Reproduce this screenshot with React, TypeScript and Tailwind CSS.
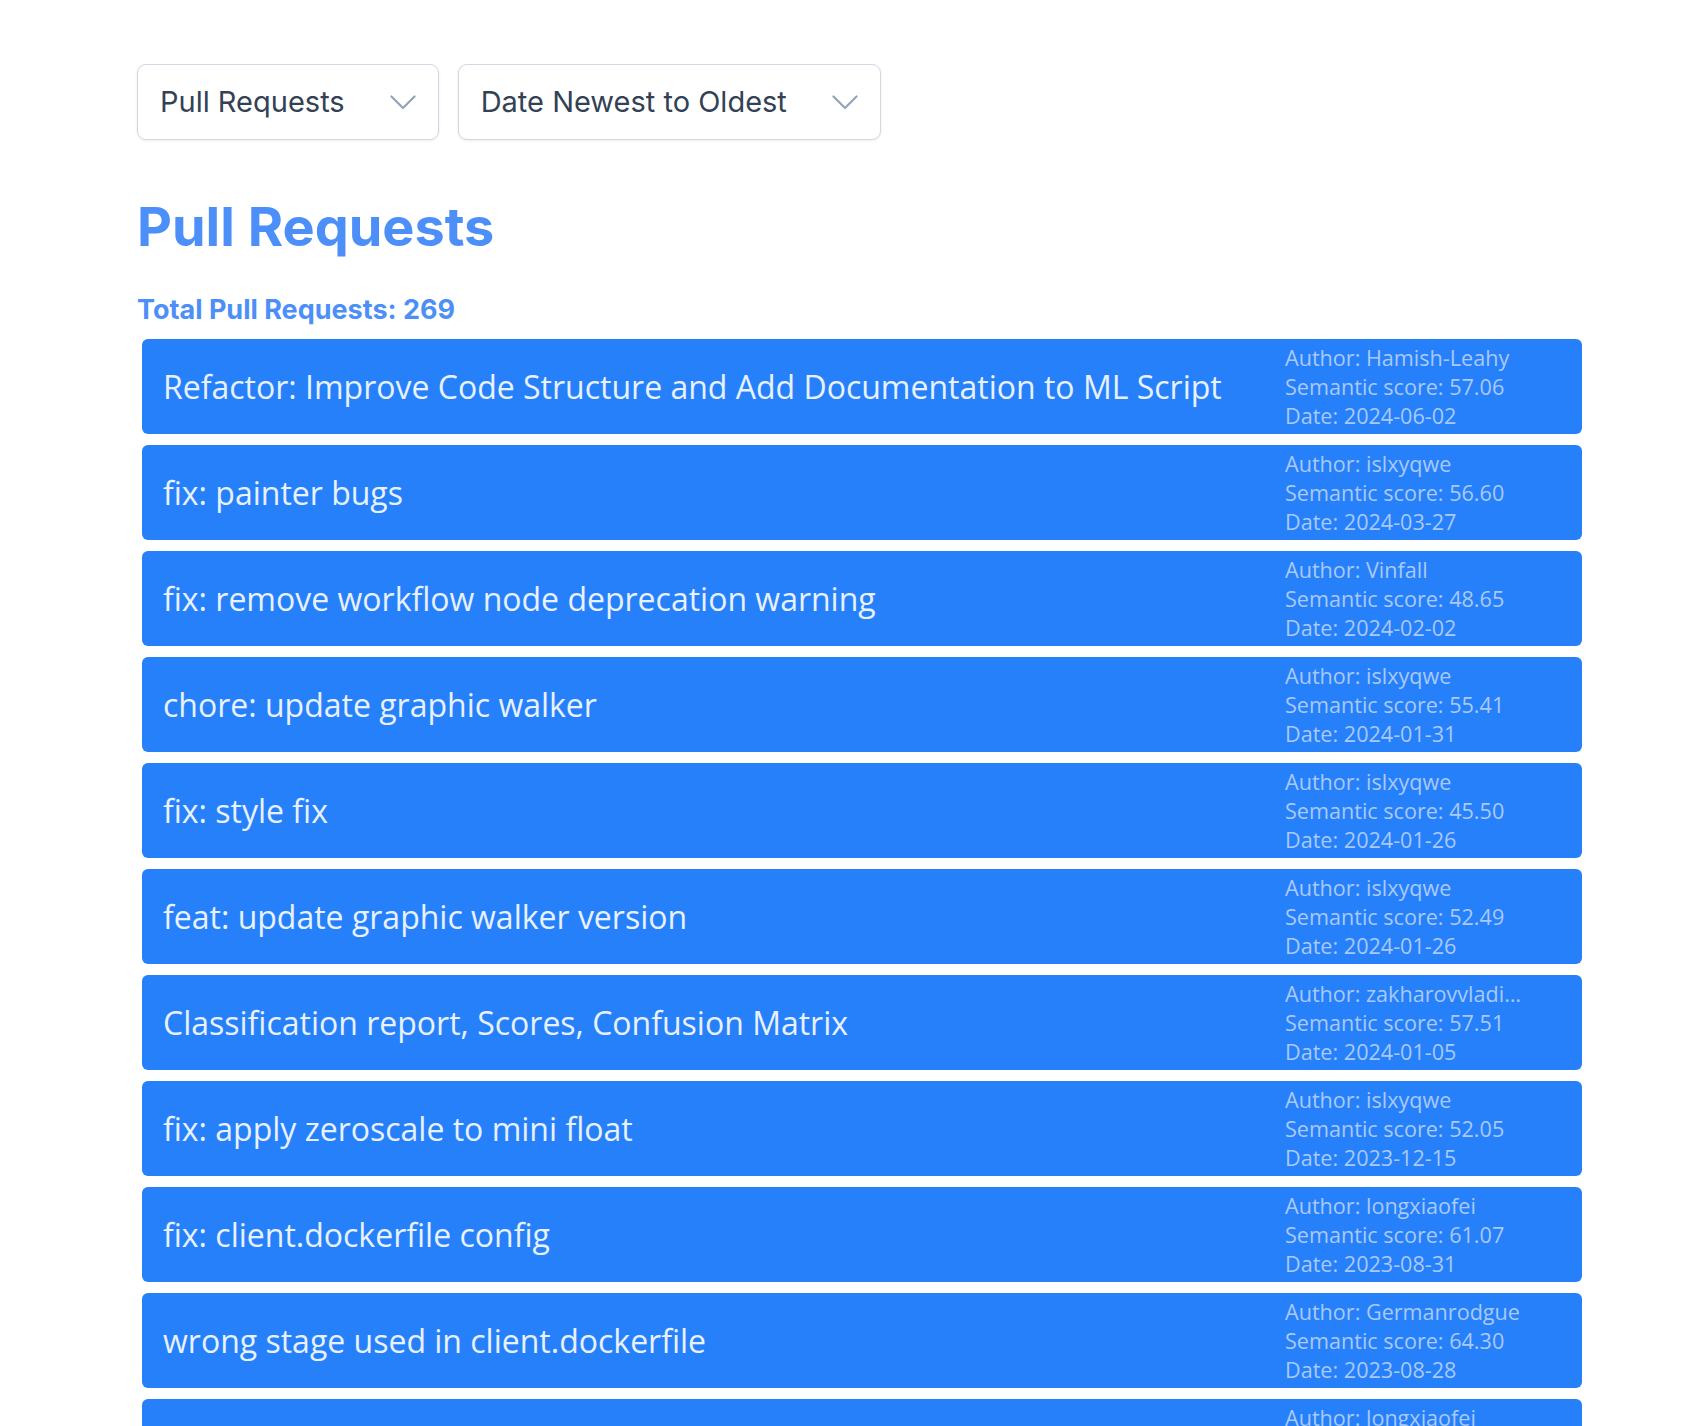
import { useState } from 'react';

type PullRequest = {
  title: string;
  author: string;
  score: number;
  date: string;
};

const PULLS: PullRequest[] = [
  { title: 'Refactor: Improve Code Structure and Add Documentation to ML Script', author: 'Hamish-Leahy', score: 57.06, date: '2024-06-02' },
  { title: 'fix: painter bugs', author: 'islxyqwe', score: 56.6, date: '2024-03-27' },
  { title: 'fix: remove workflow node deprecation warning', author: 'Vinfall', score: 48.65, date: '2024-02-02' },
  { title: 'chore: update graphic walker', author: 'islxyqwe', score: 55.41, date: '2024-01-31' },
  { title: 'fix: style fix', author: 'islxyqwe', score: 45.5, date: '2024-01-26' },
  { title: 'feat: update graphic walker version', author: 'islxyqwe', score: 52.49, date: '2024-01-26' },
  { title: 'Classification report, Scores, Confusion Matrix', author: 'zakharovvladimir', score: 57.51, date: '2024-01-05' },
  { title: 'fix: apply zeroscale to mini float', author: 'islxyqwe', score: 52.05, date: '2023-12-15' },
  { title: 'fix: client.dockerfile config', author: 'longxiaofei', score: 61.07, date: '2023-08-31' },
  { title: 'wrong stage used in client.dockerfile', author: 'Germanrodgue', score: 64.3, date: '2023-08-28' },
  { title: 'feat: support client dockerfile', author: 'longxiaofei', score: 58.12, date: '2023-08-25' },
];

function Chevron() {
  return (
    <svg width="26" height="15" viewBox="0 0 26 15" fill="none" className="shrink-0">
      <polyline points="1.5,1.5 13,13 24.5,1.5" stroke="#94a3b8" strokeWidth="2.2" strokeLinecap="round" strokeLinejoin="round" />
    </svg>
  );
}

function Dropdown({ label }: { label: string }) {
  return (
    <button className="h-[76px] flex items-center gap-[45px] pl-[22px] pr-[22px] bg-white border border-[#cfd8e3] rounded-[9px] shadow-[0_1px_3px_rgba(15,23,42,0.08)] text-[29px] leading-9 text-[#334155] font-['Inter',sans-serif]">
      <span>{label}</span>
      <Chevron />
    </button>
  );
}

export default function App() {
  const [kind] = useState('Pull Requests');
  const [sort] = useState('Date Newest to Oldest');

  return (
    <div className="min-h-screen bg-white pl-[137px] pr-[106px] pt-[64px] font-['Inter',sans-serif]">
      <div className="flex gap-[19px]">
        <Dropdown label={kind} />
        <Dropdown label={sort} />
      </div>

      <h1 className="mt-[60px] text-[54px] leading-[54px] font-bold text-[#4c8ff8]">Pull Requests</h1>
      <p className="mt-[40px] text-[27px] leading-8 font-bold text-[#4c8ff8]">Total Pull Requests: 269</p>

      <ul className="mt-[13px] ml-[5px] flex flex-col gap-[11px] pb-10">
        {PULLS.map((p, i) => (
          <li
            key={i}
            className="h-[95px] flex items-center bg-[#2680fa] rounded-md font-['Open_Sans','Noto_Sans',sans-serif]"
          >
            <span className="flex-1 min-w-0 pl-[21px] pr-4 text-[32px] text-[#e8f1ff] truncate">{p.title}</span>
            <div className="w-[240px] mr-[57px] text-[21.6px] leading-[29px] text-[#a9c9fb]">
              <p className="truncate">Author: {p.author}</p>
              <p>Semantic score: {p.score.toFixed(2)}</p>
              <p>Date: {p.date}</p>
            </div>
          </li>
        ))}
      </ul>
    </div>
  );
}
